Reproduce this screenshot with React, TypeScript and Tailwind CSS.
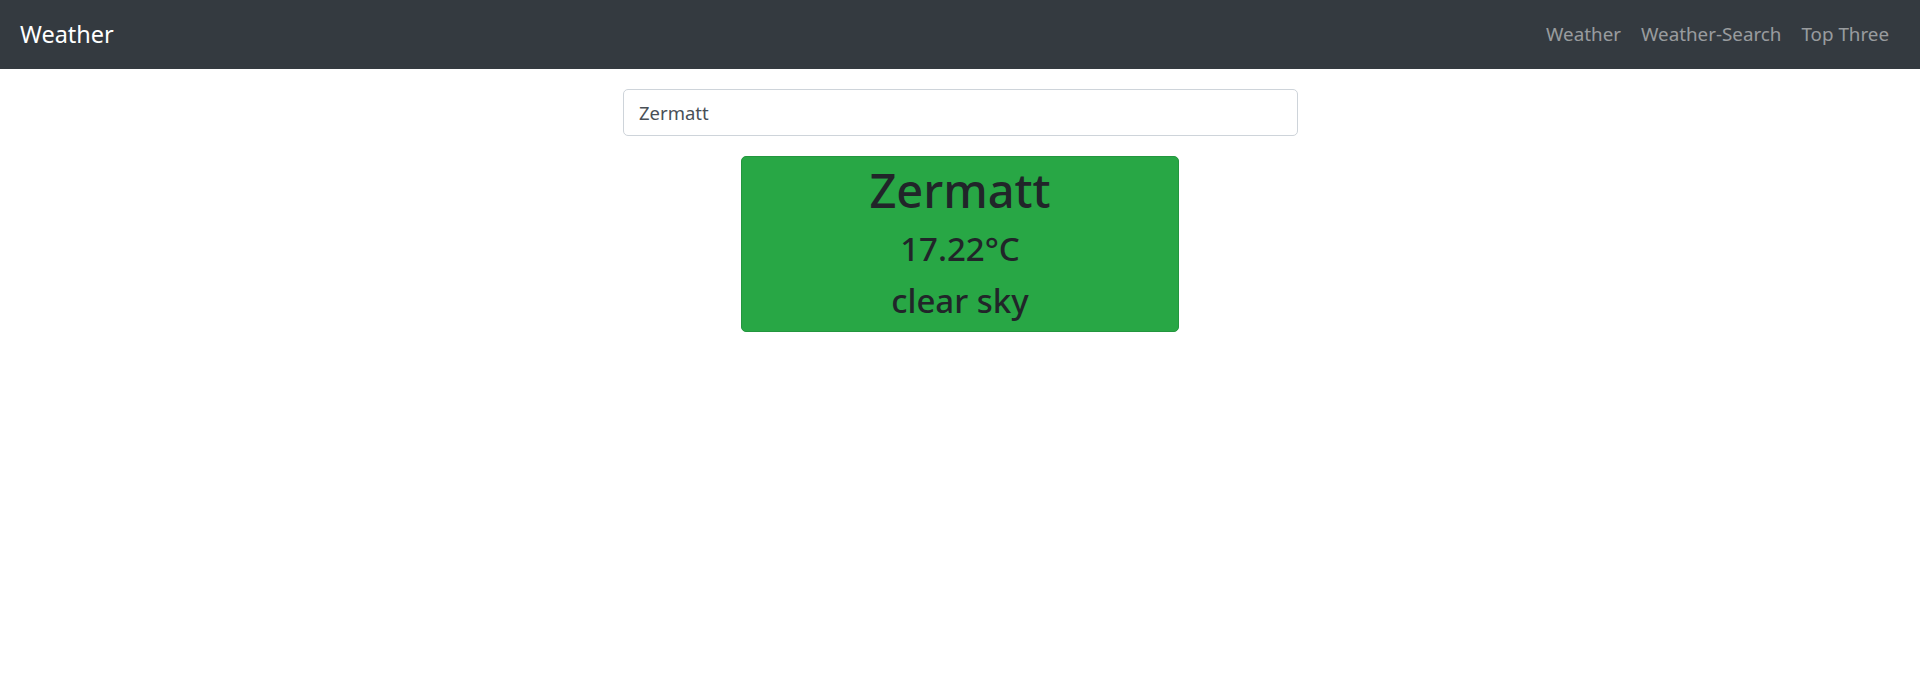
export default function App() {
  const links = ['Weather', 'Weather-Search', 'Top Three'];

  return (
    <div className="min-h-[686px] bg-white font-['Noto_Sans',sans-serif] text-[#212529]">
      <nav className="flex h-[69px] items-center justify-between bg-[#343a40] px-5">
        <span className="text-[23.5px] leading-none text-white">Weather</span>
        <ul className="flex items-center gap-[20px] pr-[11px]">
          {links.map((link) => (
            <li key={link} className="text-[18.8px] text-[rgba(255,255,255,0.5)]">
              {link}
            </li>
          ))}
        </ul>
      </nav>

      <div className="flex flex-col pt-5">
        <input
          defaultValue="Zermatt"
          className="ml-[623px] h-[47px] w-[675px] rounded-[5px] border border-[#ced4da] px-[15px] text-[18.5px] text-[#495057] outline-none"
        />

        <div className="mx-auto mt-5 flex h-[176px] w-[438px] flex-col items-center rounded-[5px] border border-[#23963e] bg-[#28a745]">
          <h1 className="mt-[5px] text-[47px] leading-[1.2] font-medium">Zermatt</h1>
          <h3 className="mt-[11px] text-[33px] leading-[1.2] font-medium">17.22°C</h3>
          <h3 className="mt-[12px] text-[33px] leading-[1.2] font-medium">clear sky</h3>
        </div>
      </div>
    </div>
  );
}
